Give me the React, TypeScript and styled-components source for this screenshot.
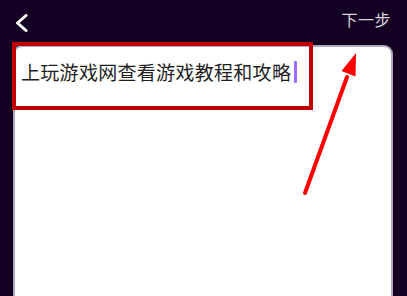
import styled, { createGlobalStyle } from 'styled-components';

const GlobalStyle = createGlobalStyle`
  html, body {
    margin: 0;
    padding: 0;
    background: #140022;
  }
  body {
    font-family: "Noto Sans CJK SC", "Noto Sans", sans-serif;
  }
`;

const Screen = styled.div`
  position: relative;
  width: 407px;
  height: 296px;
  overflow: hidden;
  background: #140022;
  display: flex;
  flex-direction: column;
`;

const TopBar = styled.div`
  height: 45px;
  flex-shrink: 0;
  display: flex;
  align-items: center;
  justify-content: space-between;
  padding: 0 16px 0 14px;
  box-sizing: border-box;
`;

const BackButton = styled.button`
  border: none;
  background: none;
  padding: 0;
  width: 14px;
  height: 18px;
  display: flex;
  align-items: center;
  cursor: pointer;
`;

const NextLink = styled.span`
  color: #d8d4dc;
  font-size: 16px;
  line-height: 20px;
  letter-spacing: 0.5px;
  margin-bottom: 7px;
`;

const Card = styled.div`
  flex: 1;
  margin: 0 14px 0 13px;
  background: #fff;
  border: 2px solid #aea6b9;
  border-bottom: none;
  border-radius: 9px 9px 0 0;
  padding: 13px 6px;
`;

const InputLine = styled.div`
  display: flex;
  align-items: center;
  color: #1e1e1e;
  font-size: 19px;
  line-height: 24px;
  letter-spacing: 0.3px;
`;

const Caret = styled.span`
  display: inline-block;
  width: 3px;
  height: 22px;
  margin-left: 3px;
  border-radius: 1px;
  background: #9a6cff;
`;

const Highlight = styled.div`
  position: absolute;
  left: 12px;
  top: 42px;
  width: 301px;
  height: 68px;
  box-sizing: border-box;
  border: 4.5px solid #c20000;
  pointer-events: none;
`;

const Overlay = styled.svg`
  position: absolute;
  inset: 0;
  pointer-events: none;
`;

export default function App() {
  return (
    <>
      <GlobalStyle />
      <Screen>
        <TopBar>
          <BackButton aria-label="返回">
            <svg width="14" height="18" viewBox="0 0 14 18">
              <path d="M12 1.5 L3.5 9 L12 16.5" fill="none" stroke="#fff" strokeWidth="3" strokeLinecap="round" strokeLinejoin="round" />
            </svg>
          </BackButton>
          <NextLink>下一步</NextLink>
        </TopBar>
        <Card>
          <InputLine>
            上玩游戏网查看游戏教程和攻略
            <Caret />
          </InputLine>
        </Card>
        <Highlight />
        <Overlay width="407" height="296" viewBox="0 0 407 296">
          <line x1="305" y1="193" x2="347" y2="77" stroke="#ff0000" strokeWidth="4" strokeLinecap="round" />
          <polygon points="356,53 341.5,71 355.5,76.5" fill="#ff0000" />
        </Overlay>
      </Screen>
    </>
  );
}
